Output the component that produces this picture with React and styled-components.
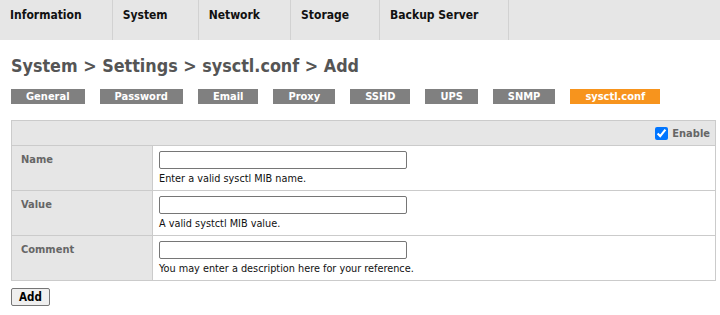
import React from "react";
import styled, { createGlobalStyle } from "styled-components";

const Global = createGlobalStyle`
  html, body { margin: 0; padding: 0; background: #fff; }
  body { font-family: "DejaVu Sans Condensed", "DejaVu Sans", Verdana, sans-serif; color: #000; }
  * { box-sizing: border-box; }
`;

const Nav = styled.nav`
  display: flex;
  height: 40px;
  background: #e6e6e6;
`;

const NavTab = styled.div`
  padding: 8px 30px 0 10px;
  border-right: 1px solid #d2d2d2;
  font-size: 12px;
  font-weight: bold;
  color: #111;
  white-space: nowrap;
`;

const Content = styled.main`
  padding: 0 4px 0 11px;
`;

const Title = styled.h1`
  margin: 14px 0 0;
  font-size: 17.8px;
  line-height: 23px;
  font-weight: bold;
  color: #555;
`;

const SubTabs = styled.div`
  display: flex;
  gap: 15px;
  margin-top: 12px;
`;

const SubTab = styled.div`
  height: 15px;
  padding: 0 15px;
  line-height: 15px;
  font-size: 11px;
  font-weight: bold;
  color: #fff;
  background: ${(p) => (p.$active ? "#f7941d" : "#808080")};
  white-space: nowrap;
`;

const Form = styled.div`
  margin-top: 16px;
  display: grid;
  grid-template-columns: 141px 1fr;
  border-top: 1px solid #cbcbcb;
  border-left: 1px solid #cbcbcb;
`;

const HeaderRow = styled.div`
  grid-column: 1 / -1;
  height: 25px;
  background: #e6e6e6;
  border-right: 1px solid #cbcbcb;
  border-bottom: 1px solid #cbcbcb;
  display: flex;
  align-items: center;
  justify-content: flex-end;
  padding-right: 5px;
`;

const EnableLabel = styled.label`
  display: flex;
  align-items: center;
  gap: 4px;
  font-size: 11px;
  font-weight: bold;
  color: #666;
`;

const Check = styled.input`
  margin: 0;
  width: 13px;
  height: 13px;
`;

const LabelCell = styled.div`
  height: 45px;
  background: #e6e6e6;
  border-right: 1px solid #cbcbcb;
  border-bottom: 1px solid #cbcbcb;
  padding: 7px 0 0 9px;
  font-size: 11px;
  font-weight: bold;
  color: #666;
`;

const ValueCell = styled.div`
  height: 45px;
  border-right: 1px solid #cbcbcb;
  border-bottom: 1px solid #cbcbcb;
  padding: 5px 0 0 6px;
  display: flex;
  flex-direction: column;
  align-items: flex-start;
`;

const TextInput = styled.input`
  width: 248px;
  height: 18px;
  margin: 0;
  border: 1px solid #767676;
  border-radius: 2px;
  padding: 1px 2px;
  font-size: 11px;
`;

const Help = styled.div`
  margin-top: 3px;
  font-size: 10.8px;
  line-height: 13px;
  color: #111;
`;

const AddButton = styled.button`
  margin-top: 7px;
  height: 18px;
  padding: 0 7px;
  font-family: inherit;
  font-size: 11.5px;
  font-weight: bold;
  color: #000;
  background: #efefef;
  border: 1px solid #767676;
  border-radius: 2px;
`;

const navItems = ["Information", "System", "Network", "Storage", "Backup Server"];
const subTabs = ["General", "Password", "Email", "Proxy", "SSHD", "UPS", "SNMP", "sysctl.conf"];
const rows = [
  ["Name", "Enter a valid sysctl MIB name."],
  ["Value", "A valid systctl MIB value."],
  ["Comment", "You may enter a description here for your reference."],
];

export default function App() {
  return (
    <>
      <Global />
      <Nav>
        {navItems.map((n) => (
          <NavTab key={n}>{n}</NavTab>
        ))}
      </Nav>
      <Content>
        <Title>System &gt; Settings &gt; sysctl.conf &gt; Add</Title>
        <SubTabs>
          {subTabs.map((t) => (
            <SubTab key={t} $active={t === "sysctl.conf"}>
              {t}
            </SubTab>
          ))}
        </SubTabs>
        <Form>
          <HeaderRow>
            <EnableLabel>
              <Check type="checkbox" defaultChecked />
              Enable
            </EnableLabel>
          </HeaderRow>
          {rows.map(([label, help]) => (
            <React.Fragment key={label}>
              <LabelCell>{label}</LabelCell>
              <ValueCell>
                <TextInput type="text" />
                <Help>{help}</Help>
              </ValueCell>
            </React.Fragment>
          ))}
        </Form>
        <AddButton>Add</AddButton>
      </Content>
    </>
  );
}
